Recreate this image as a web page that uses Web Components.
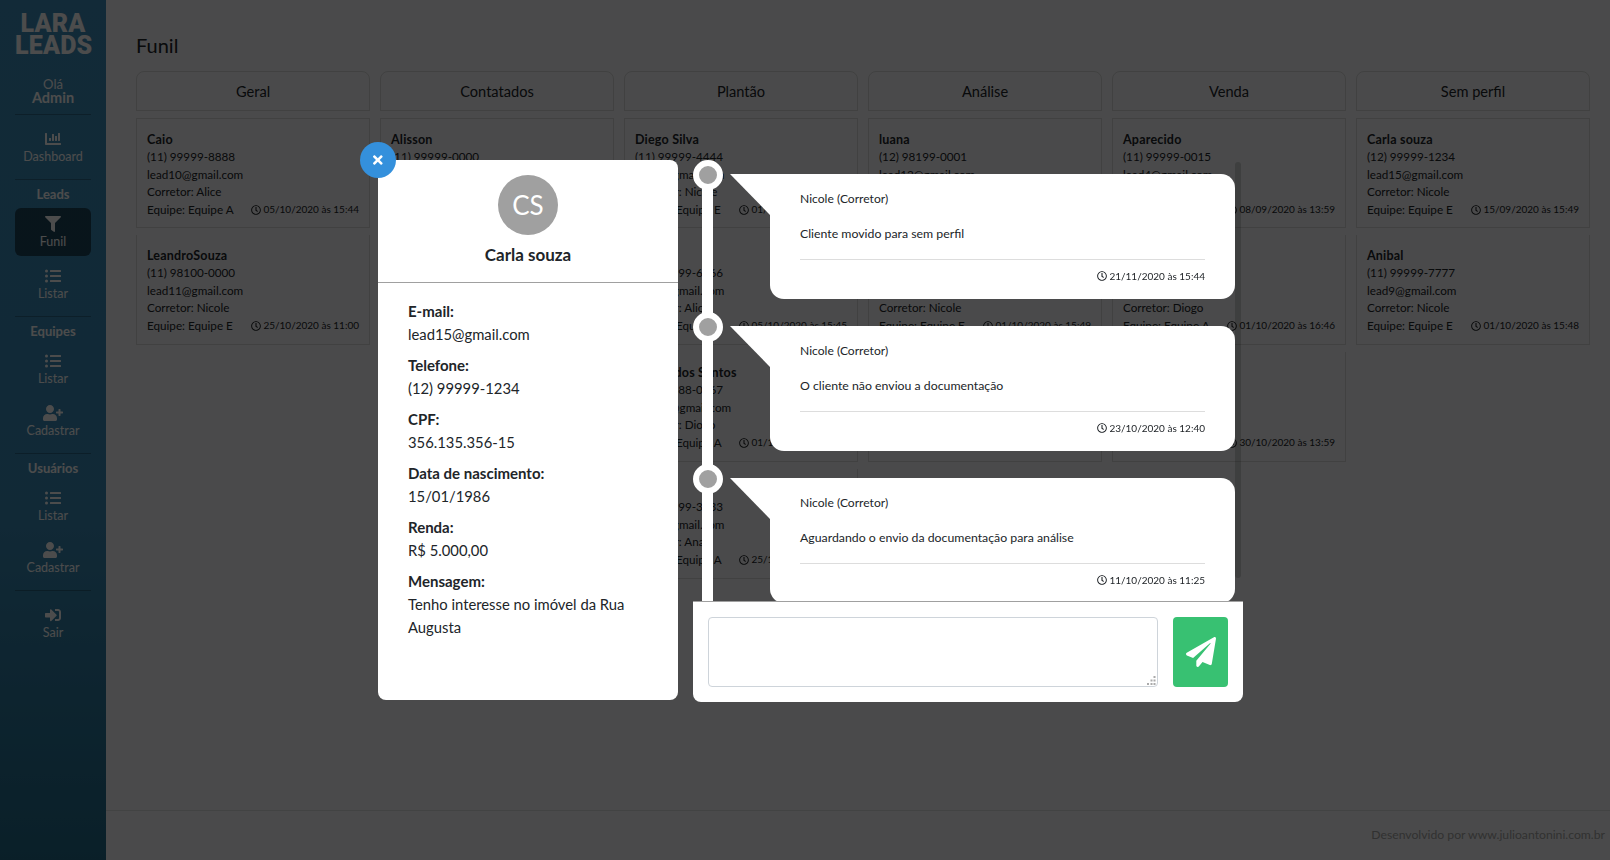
<!DOCTYPE html>
<html lang="pt-BR">
<head>
<meta charset="utf-8">
<title>Funil</title>
<style>
    html, body { margin: 0; height: 100%; }
    body { font-family: Lato, "Noto Sans", sans-serif; color: #212529; background: #f8f9fa; overflow: hidden; }
</style>
</head>
<body>
<lead-app></lead-app>

<script>
// FontAwesome 5 shapes, [viewBox width, path]
const ICONS = Object.freeze({
    chart: [512, "M332.8 320h38.4c6.4 0 12.8-6.4 12.8-12.8V172.8c0-6.4-6.4-12.8-12.8-12.8h-38.4c-6.4 0-12.8 6.4-12.8 12.8v134.4c0 6.4 6.4 12.8 12.8 12.8zm96 0h38.4c6.4 0 12.8-6.4 12.8-12.8V76.8c0-6.4-6.4-12.8-12.8-12.8h-38.4c-6.4 0-12.8 6.4-12.8 12.8v230.4c0 6.4 6.4 12.8 12.8 12.8zm-288 0h38.4c6.4 0 12.8-6.4 12.8-12.8v-70.4c0-6.4-6.4-12.8-12.8-12.8h-38.4c-6.4 0-12.8 6.4-12.8 12.8v70.4c0 6.4 6.4 12.8 12.8 12.8zm96 0h38.4c6.4 0 12.8-6.4 12.8-12.8V108.8c0-6.4-6.4-12.8-12.8-12.8h-38.4c-6.4 0-12.8 6.4-12.8 12.8v198.4c0 6.4 6.4 12.8 12.8 12.8zM496 384H64V80c0-8.84-7.16-16-16-16H16C7.16 64 0 71.16 0 80v336c0 17.67 14.33 32 32 32h464c8.84 0 16-7.16 16-16v-32c0-8.84-7.16-16-16-16z"],
    filter: [512, "M487.976 0H24.028C2.71 0-8.047 25.866 7.058 40.971L192 225.941V432c0 7.831 3.821 15.17 10.237 19.662l80 55.98C298.02 518.69 320 507.493 320 487.98V225.941l184.947-184.97C520.021 25.896 509.338 0 487.976 0z"],
    list: [512, "M48 48a48 48 0 1 0 48 48 48 48 0 0 0-48-48zm0 160a48 48 0 1 0 48 48 48 48 0 0 0-48-48zm0 160a48 48 0 1 0 48 48 48 48 0 0 0-48-48zm448 16H176a16 16 0 0 0-16 16v32a16 16 0 0 0 16 16h320a16 16 0 0 0 16-16v-32a16 16 0 0 0-16-16zm0-320H176a16 16 0 0 0-16 16v32a16 16 0 0 0 16 16h320a16 16 0 0 0 16-16V80a16 16 0 0 0-16-16zm0 160H176a16 16 0 0 0-16 16v32a16 16 0 0 0 16 16h320a16 16 0 0 0 16-16v-32a16 16 0 0 0-16-16z"],
    userPlus: [640, "M624 208h-64v-64c0-8.8-7.2-16-16-16h-32c-8.8 0-16 7.2-16 16v64h-64c-8.8 0-16 7.2-16 16v32c0 8.8 7.2 16 16 16h64v64c0 8.8 7.2 16 16 16h32c8.8 0 16-7.2 16-16v-64h64c8.8 0 16-7.2 16-16v-32c0-8.8-7.2-16-16-16zm-400 48c70.7 0 128-57.3 128-128S294.7 0 224 0 96 57.3 96 128s57.3 128 128 128zm89.6 32h-16.7c-22.2 10.2-46.9 16-72.9 16s-50.6-5.8-72.9-16h-16.7C60.2 288 0 348.2 0 422.4V464c0 26.5 21.5 48 48 48h352c26.5 0 48-21.5 48-48v-41.6c0-74.2-60.2-134.4-134.4-134.4z"],
    signIn: [512, "M416 448h-84c-6.6 0-12-5.4-12-12v-40c0-6.6 5.4-12 12-12h84c17.7 0 32-14.3 32-32V160c0-17.7-14.3-32-32-32h-84c-6.6 0-12-5.4-12-12V76c0-6.6 5.4-12 12-12h84c53 0 96 43 96 96v192c0 53-43 96-96 96zm-47-201L201 79c-15-15-41-4.5-41 17v96H24c-13.3 0-24 10.7-24 24v96c0 13.3 10.7 24 24 24h136v96c0 21.5 26 32 41 17l168-168c9.3-9.4 9.3-24.6 0-34z"],
    clock: [512, "M256 8C119 8 8 119 8 256s111 248 248 248 248-111 248-248S393 8 256 8zm0 448c-110.5 0-200-89.5-200-200S145.5 56 256 56s200 89.5 200 200-89.5 200-200 200zm61.8-104.4l-84.9-61.7c-3.1-2.3-4.9-5.9-4.9-9.7V116c0-6.6 5.4-12 12-12h32c6.6 0 12 5.4 12 12v141.7l66.8 48.6c5.4 3.9 6.5 11.4 2.6 16.8L334.6 349c-3.9 5.3-11.4 6.5-16.8 2.6z"],
    times: [352, "M242.72 256l100.07-100.07c12.28-12.28 12.28-32.19 0-44.48l-22.24-22.24c-12.28-12.28-32.19-12.28-44.48 0L176 189.28 75.93 89.21c-12.28-12.28-32.19-12.28-44.48 0L9.21 111.45c-12.28 12.28-12.28 32.19 0 44.48L109.28 256 9.21 356.07c-12.28 12.28-12.28 32.19 0 44.48l22.24 22.24c12.28 12.28 32.2 12.28 44.48 0L176 322.72l100.07 100.07c12.28 12.28 32.2 12.28 44.48 0l22.24-22.24c12.28-12.28 12.28-32.19 0-44.48L242.72 256z"],
    plane: [512, "M476 3.2L12.5 270.6c-18.1 10.4-15.8 35.6 2.2 43.2L121 358.4l287.3-253.2c5.5-4.9 13.3 2.6 8.6 8.3L176 407v80.5c0 23.6 28.5 32.9 42.5 15.8L282 426l124.6 52.2c14.2 6 30.4-2.9 33-18.2l72-432C515 7.8 493.3-6.8 476 3.2z"]
});

// empty strings are fields covered by the modal in the reference
const COLUMNS = [
    { title: "Geral", leads: [
        ["Caio", "(11) 99999-8888", "lead10@gmail.com", "Alice", "Equipe A", "05/10/2020 às 15:44"],
        ["LeandroSouza", "(11) 98100-0000", "lead11@gmail.com", "Nicole", "Equipe E", "25/10/2020 às 11:00"]
    ]},
    { title: "Contatados", leads: [
        ["Alisson", "(11) 99999-0000", "", "", "", ""]
    ]},
    { title: "Plantão", leads: [
        ["Diego Silva", "(11) 99999-4444", "lead6@gmail.com", "Nicole", "Equipe E", "01/10/2020 às 15:40"],
        ["", "(11) 99999-6666", "lead5@gmail.com", "Alice", "Equipe A", "05/10/2020 às 15:45"],
        ["Carlos dos Santos", "(11) 98888-0067", "lead14@gmail.com", "Diogo", "Equipe A", "01/10/2020 às 15:40"],
        ["", "(11) 99999-3333", "lead7@gmail.com", "Ana", "Equipe A", "25/10/2020 às 11:00"]
    ]},
    { title: "Análise", leads: [
        ["luana", "(12) 98199-0001", "lead12@gmail.com", "", "", ""],
        ["", "", "", "Nicole", "Equipe E", "01/10/2020 às 15:49"],
        ["", "", "", "", "", ""]
    ]},
    { title: "Venda", leads: [
        ["Aparecido", "(11) 99999-0015", "lead4@gmail.com", "", "", "08/09/2020 às 13:59"],
        ["", "", "", "Diogo", "Equipe A", "01/10/2020 às 16:46"],
        ["", "", "", "", "", "30/10/2020 às 13:59"]
    ]},
    { title: "Sem perfil", leads: [
        ["Carla souza", "(12) 99999-1234", "lead15@gmail.com", "Nicole", "Equipe E", "15/09/2020 às 15:49"],
        ["Anibal", "(11) 99999-7777", "lead9@gmail.com", "Nicole", "Equipe E", "01/10/2020 às 15:48"]
    ]}
];

const DETAILS = [
    ["E-mail:", "lead15@gmail.com"],
    ["Telefone:", "(12) 99999-1234"],
    ["CPF:", "356.135.356-15"],
    ["Data de nascimento:", "15/01/1986"],
    ["Renda:", "R$ 5.000,00"],
    ["Mensagem:", "Tenho interesse no imóvel da Rua Augusta"]
];

const HISTORY = [
    ["Cliente movido para sem perfil", "21/11/2020 às 15:44"],
    ["O cliente não enviou a documentação", "23/10/2020 às 12:40"],
    ["Aguardando o envio da documentação para análise", "11/10/2020 às 11:25"]
];

class FaIcon extends HTMLElement {
    connectedCallback() {
        const [width, path] = ICONS[this.getAttribute("name")];
        const size = Number(this.getAttribute("size") || 16);
        this.attachShadow({mode: "open"}).innerHTML = `
            <style>:host { display: inline-flex; line-height: 0; } svg { display: block; fill: currentColor; }</style>
            <svg width="${size * width / 512}" height="${size}" viewBox="0 0 ${width} 512"><path d="${path}"/></svg>`;
    }
}

class NavItem extends HTMLElement {
    connectedCallback() {
        this.attachShadow({mode: "open"}).innerHTML = `
            <style>
                :host { display: block; height: 48px; margin-bottom: 4px; text-align: center; border-radius: 6px; color: #fff; }
                :host([active]) { background: rgba(0,0,0,.5); }
                .icon { display: flex; justify-content: center; align-items: center; height: 16px; padding-top: 8px; }
                .label { display: block; font-size: 12.5px; line-height: 16px; margin-top: 2px; }
            </style>
            <div class="icon"><fa-icon name="${this.getAttribute("icon")}"></fa-icon></div>
            <span class="label"><slot></slot></span>`;
    }
}

class SideNav extends HTMLElement {
    connectedCallback() {
        this.attachShadow({mode: "open"}).innerHTML = `
            <style>
                :host { display: block; flex: none; width: 106px; box-sizing: border-box; padding: 13px 15px 0; color: #fff;
                    background: linear-gradient(#3c8dbb 0%, #3a8ab6 60%, #226a88 100%); }
                .logo { width: 76px; height: 44px; font: 900 25px/22px Roboto, sans-serif; text-align: center; letter-spacing: .2px; }
                .hello { margin-top: 20px; text-align: center; font-size: 13px; line-height: 14px; }
                .hello b { display: block; font-size: 14.5px; }
                hr { border: 0; height: 1px; margin: 8px 0 0; background: rgba(0,0,0,.25); }
                .head { height: 28px; line-height: 28px; text-align: center; font-size: 13px; font-weight: 700; }
            </style>
            <div class="logo">LARA LEADS</div>
            <div class="hello">Olá<b>Admin</b></div>
            <hr style="margin-top:9px">
            <nav-item icon="chart" style="margin-top:8px">Dashboard</nav-item>
            <hr>
            <div class="head">Leads</div>
            <nav-item icon="filter" active>Funil</nav-item>
            <nav-item icon="list">Listar</nav-item>
            <hr>
            <div class="head">Equipes</div>
            <nav-item icon="list">Listar</nav-item>
            <nav-item icon="userPlus">Cadastrar</nav-item>
            <hr>
            <div class="head">Usuários</div>
            <nav-item icon="list">Listar</nav-item>
            <nav-item icon="userPlus">Cadastrar</nav-item>
            <hr>
            <nav-item icon="signIn" style="margin-top:8px">Sair</nav-item>`;
    }
}

class LeadCard extends HTMLElement {
    set lead(values) {
        const [name, phone, email, broker, team, date] = values;
        const line = (text) => `<div>${text || "&nbsp;"}</div>`;
        this.attachShadow({mode: "open"}).innerHTML = `
            <style>
                :host { display: block; box-sizing: border-box; height: 110px; padding: 11.5px 10px 8px; border: 1px solid rgba(0,0,0,.125);
                    font-size: 11.7px; line-height: 17.6px; }
                b { display: block; font-size: 12.5px; font-weight: 700; letter-spacing: .2px; }
                .foot { display: flex; justify-content: space-between; align-items: center; }
                .date { display: flex; align-items: center; gap: 2.5px; font-size: 10px; }
            </style>
            <b>${name || "&nbsp;"}</b>
            ${line(phone)}
            ${line(email)}
            ${line(broker && "Corretor: " + broker)}
            <div class="foot">
                <span>${team ? "Equipe: " + team : "&nbsp;"}</span>
                ${date ? `<span class="date"><fa-icon name="clock" size="10"></fa-icon>${date}</span>` : ""}
            </div>`;
    }
}

class FunnelColumn extends HTMLElement {
    set column(data) {
        const root = this.attachShadow({mode: "open"});
        root.innerHTML = `
            <style>
                :host { display: flex; flex-direction: column; gap: 7px; min-width: 0; }
                .title { height: 40px; box-sizing: border-box; border: 1px solid rgba(0,0,0,.125); border-radius: 8px 8px 0 0;
                    text-align: center; font-size: 14.6px; line-height: 40px; }
                lead-card + lead-card { border-top: 0; }
            </style>
            <div class="title">${data.title}</div>`;
        data.leads.forEach((lead) => {
            const card = document.createElement("lead-card");
            card.lead = lead;
            root.appendChild(card);
        });
    }
}

class FunnelBoard extends HTMLElement {
    connectedCallback() {
        const root = this.attachShadow({mode: "open"});
        root.innerHTML = `
            <style>
                :host { display: flex; flex-direction: column; flex: 1; min-width: 0; }
                main { flex: 1; padding: 30px 20px 0 30px; }
                h1 { margin: 0 0 11px; font-size: 20px; line-height: 30px; font-weight: 400; }
                .grid { display: grid; grid-template-columns: repeat(6, 1fr); gap: 10px; align-items: start; }
                footer { height: 50px; box-sizing: border-box; border-top: 1px solid rgba(0,0,0,.1); padding: 15px 5px 0 0;
                    text-align: right; font-size: 12.2px; line-height: 18px; color: #a5a5a5; }
            </style>
            <main>
                <h1>Funil</h1>
                <div class="grid"></div>
            </main>
            <footer>Desenvolvido por www.julioantonini.com.br</footer>`;
        const grid = root.querySelector(".grid");
        COLUMNS.forEach((data) => {
            const column = document.createElement("funnel-column");
            column.column = data;
            grid.appendChild(column);
        });
    }
}

class LeadDetails extends HTMLElement {
    connectedCallback() {
        const rows = DETAILS.map(([label, value]) => `<dt>${label}</dt><dd>${value}</dd>`).join("");
        this.attachShadow({mode: "open"}).innerHTML = `
            <style>
                :host { display: block; flex: none; width: 300px; height: 540px; background: #fff; border-radius: 8px; color: #212529; }
                .head { height: 123px; box-sizing: border-box; padding-top: 15px; border-bottom: 1px solid #a0a0a0; text-align: center; }
                .avatar { width: 60px; height: 60px; margin: 0 auto 8px; border-radius: 50%; background: #a0a0a0; color: #fff;
                    font-size: 26px; line-height: 60px; }
                .name { font-size: 17px; line-height: 24px; font-weight: 700; }
                dl { margin: 0; padding: 17px 30px 0; font-size: 14.8px; line-height: 23px; }
                dt { font-size: 15px; font-weight: 700; }
                dd { margin: 0 0 8px; }
            </style>
            <div class="head">
                <div class="avatar">CS</div>
                <div class="name">Carla souza</div>
            </div>
            <dl>${rows}</dl>`;
    }
}

class HistoryItem extends HTMLElement {
    connectedCallback() {
        this.attachShadow({mode: "open"}).innerHTML = `
            <style>
                :host { display: block; position: relative; width: 465px; height: 125px; margin: 0 0 27px 77px; box-sizing: border-box;
                    padding: 16px 30px 0; background: #fff; border-radius: 0 14px 14px 14px; font-size: 12.3px; line-height: 18px; }
                :host::before { content: ""; position: absolute; left: -40px; top: 0; width: 0; height: 0;
                    border-top: 41px solid #fff; border-left: 40px solid transparent; }
                .knob { position: absolute; left: -77px; top: -14px; width: 18px; height: 18px; border: 6px solid #fff; border-radius: 50%; background: #a0a0a0; }
                .name { font-size: 12.1px; }
                .text { margin: 17px 0 16px; }
                hr { border: 0; height: 1px; margin: 0 0 7px; background: #ddd; }
                .date { display: flex; justify-content: flex-end; align-items: center; gap: 2.5px; font-size: 10px; }
            </style>
            <span class="knob"></span>
            <div class="name">Nicole (Corretor)</div>
            <div class="text"><slot></slot></div>
            <hr>
            <div class="date"><fa-icon name="clock" size="10"></fa-icon>${this.getAttribute("date")}</div>`;
    }
}

class NoteForm extends HTMLElement {
    connectedCallback() {
        this.attachShadow({mode: "open"}).innerHTML = `
            <style>
                :host { display: flex; gap: 15px; height: 101px; box-sizing: border-box; padding: 15px; border-top: 1px solid #a0a0a0;
                    background: #fff; border-radius: 0 0 8px 8px; }
                .field { position: relative; flex: 1; min-width: 0; height: 70px; }
                textarea { display: block; width: 100%; height: 70px; box-sizing: border-box; margin: 0; border: 1px solid #ced4da; border-radius: 4px; resize: none; }
                .grip { position: absolute; right: 2px; bottom: 2px; fill: #aaa; }
                button { flex: none; width: 55px; height: 70px; padding: 0; border: 0; border-radius: 4px; background: #38c172; color: #fff;
                    display: flex; align-items: center; justify-content: center; }
            </style>
            <div class="field">
                <textarea></textarea>
                <svg class="grip" width="9" height="9" viewBox="0 0 9 9">
                    <rect x="6.5" y="0" width="2" height="2"/>
                    <rect x="3.5" y="3.5" width="2" height="2"/><rect x="6.5" y="3.5" width="2" height="2"/>
                    <rect x="0" y="7" width="2" height="2"/><rect x="3.5" y="7" width="2" height="2"/><rect x="6.5" y="7" width="2" height="2"/>
                </svg>
            </div>
            <button><fa-icon name="plane" size="30"></fa-icon></button>`;
    }
}

class LeadModal extends HTMLElement {
    connectedCallback() {
        const items = HISTORY.map(([text, date]) => `<history-item date="${date}">${text}</history-item>`).join("");
        this.attachShadow({mode: "open"}).innerHTML = `
            <style>
                :host { display: block; position: fixed; inset: 0; background: rgba(0,0,0,.7); }
                .dialog { position: absolute; left: 378px; top: 160px; display: flex; gap: 15px; align-items: flex-start; }
                .close { position: absolute; left: -18px; top: -18px; width: 36px; height: 36px; border-radius: 50%; background: #3490dc; color: #fff;
                    display: flex; align-items: center; justify-content: center; }
                .right { position: relative; width: 550px; }
                .timeline { position: relative; height: 441px; overflow: hidden; padding-top: 14px; box-sizing: border-box; }
                .line { position: absolute; left: 9px; top: 14px; bottom: 0; width: 11px; background: #fff; }
                .thumb { position: absolute; left: 542px; top: 2px; width: 6px; height: 416px; border-radius: 3px; background: rgba(0,0,0,.17); }
            </style>
            <div class="dialog">
                <span class="close"><fa-icon name="times" size="14"></fa-icon></span>
                <lead-details></lead-details>
                <div class="right">
                    <div class="timeline"><span class="line"></span>${items}</div>
                    <span class="thumb"></span>
                    <note-form></note-form>
                </div>
            </div>`;
    }
}

class LeadApp extends HTMLElement {
    connectedCallback() {
        this.attachShadow({mode: "open"}).innerHTML = `
            <style>:host { display: flex; height: 100vh; }</style>
            <side-nav></side-nav>
            <funnel-board></funnel-board>
            <lead-modal></lead-modal>`;
    }
}

customElements.define("fa-icon", FaIcon);
customElements.define("nav-item", NavItem);
customElements.define("side-nav", SideNav);
customElements.define("lead-card", LeadCard);
customElements.define("funnel-column", FunnelColumn);
customElements.define("funnel-board", FunnelBoard);
customElements.define("lead-details", LeadDetails);
customElements.define("history-item", HistoryItem);
customElements.define("note-form", NoteForm);
customElements.define("lead-modal", LeadModal);
customElements.define("lead-app", LeadApp);
</script>
</body>
</html>
